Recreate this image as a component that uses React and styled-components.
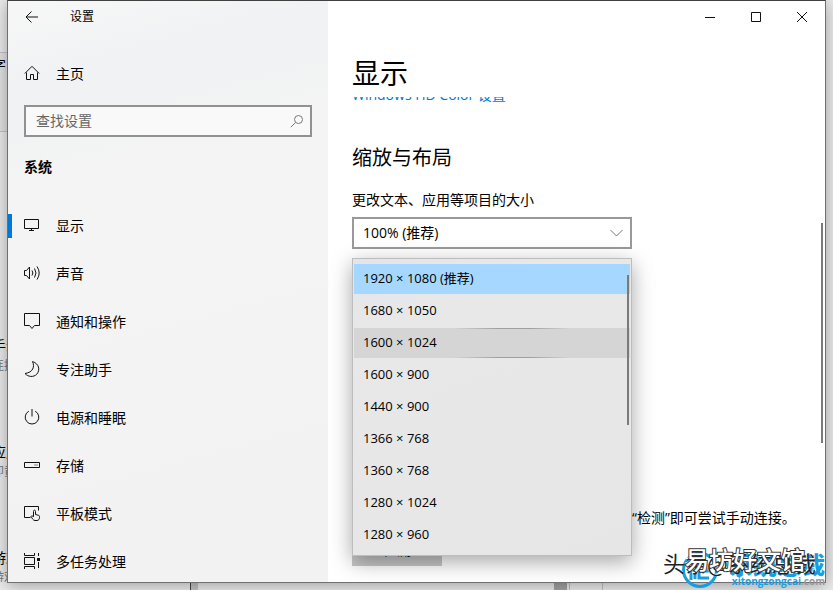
import React from "react";
import styled, { createGlobalStyle } from "styled-components";


const GlobalStyle = createGlobalStyle`
    * {
        box-sizing: border-box;
    }
    body {
        margin: 0;
        overflow: hidden;
        font-family: "Open Sans", "Noto Sans CJK SC", sans-serif;
        font-size: 14px;
        line-height: 20px;
        color: #000;
    }
    h1, h2, h3, p, ul {
        margin: 0;
        padding: 0;
        font-weight: 400;
    }
    button, input, select {
        font: inherit;
        color: inherit;
        border: 0;
        border-radius: 0;
        padding: 0;
    }
`;

const Desktop = styled.div`
    display: grid;
    grid-template: 100vh / 1fr;
    background: #ececec;

    > * {
        grid-area: 1 / 1;
    }
`;

/* the window behind, only its edges can be seen */
const Behind = styled.div`
    display: flex;
    flex-direction: column;
    overflow: hidden;
`;

const BehindLeft = styled.div`
    flex: 1;
    min-height: 0;
    width: 40px;
    overflow: hidden;
    white-space: nowrap;

    .band {
        height: 80px;
        margin-top: 52px;
        padding-top: 2px;
        border: 1px solid #c4c4c4;
        border-width: 1px 0;
        background: #e4e4e4;
    }
    .group {
        margin-top: 66px;
    }
    .first {
        margin-top: 204px;
    }
    .band, .group {
        text-indent: -8px;
    }
    small {
        display: block;
        font-size: 12px;
        color: #777;
    }
`;

const BehindBottom = styled.div`
    flex: none;
    display: grid;
    grid-template-columns: 190px 8px 356px 13px 3px 33px 1fr;
    height: 8px;

    .edge {
        background: #c4c4c4;
        border-left: 1px solid #444;
    }
    .thumb {
        background: #a3a3a3;
    }
    .line {
        border-right: 1px solid #c0c0c0;
    }
`;

const Window = styled.main`
    position: relative;
    display: grid;
    grid-template-columns: 320px 1fr;
    margin: 0 7px 7px;
    border: 1px solid #707070;
    border-top-color: #404040;
    background: #fff;
    box-shadow: 0 2px 16px rgba(0, 0, 0, 0.35);
    min-height: 0;
`;

const Sidebar = styled.aside`
    overflow: hidden;
    background: linear-gradient(165deg, #f7f7f7 0%, #f0f2f3 14%, #f4f4f4 32%, #f2f2f2 100%);
`;

const TitleBar = styled.header`
    display: flex;
    align-items: center;
    height: 32px;
    justify-content: ${({ $end }) => ($end ? "flex-end" : "flex-start")};
    font-size: 12px;
`;

const BarButton = styled.button`
    display: grid;
    place-items: center;
    width: ${({ $wide }) => ($wide ? 48 : 46)}px;
    height: 32px;
    margin-right: ${({ $wide }) => ($wide ? 14 : 0)}px;
    background: none;
`;

const NavLink = styled.a`
    display: flex;
    align-items: center;
    gap: 16px;
    height: 48px;
    padding-left: 12px;
    border-left: 4px solid transparent;
    color: inherit;
    text-decoration: none;
    white-space: nowrap;

    &::before {
        content: "";
        width: 4px;
        height: 24px;
        margin-left: -16px;
        margin-right: -4px;
        background: ${({ $active }) => ($active ? "#0078d7" : "transparent")};
    }
    svg {
        margin-bottom: 2px;
    }
`;

const HomeLink = styled(NavLink)`
    margin-top: 17px;
`;

const SearchBox = styled.label`
    display: flex;
    align-items: center;
    height: 32px;
    margin: 7px 16px 0;
    padding: 0 6px 0 10px;
    border: 2px solid #919191;
    background: #f9f9f9;

    input {
        flex: 1;
        min-width: 0;
        background: none;
        outline: 0;
    }
    input::placeholder {
        color: #666;
        opacity: 1;
    }
`;

const GroupTitle = styled.h3`
    margin: 20px 16px 25px;
    font-size: 14px;
    font-weight: 700;
`;

const Content = styled.section`
    display: flex;
    flex-direction: column;
    min-width: 0;
    min-height: 0;
`;

const PageTitle = styled.h1`
    margin: 22px 24px 6px;
    font-size: 28px;
    line-height: 36px;
`;

const ScrollArea = styled.div`
    flex: 1;
    min-height: 0;
    padding: 0 24px;
    overflow: hidden;
`;

const ColorLink = styled.a`
    display: block;
    margin-top: -12px;
    color: #0078d7;
    text-decoration: none;
`;

const SectionTitle = styled.h2`
    margin: 39px 0 18px;
    font-size: 20px;
    line-height: 28px;
`;

const Field = styled.div`
    position: relative;
    max-width: 280px;

    label {
        display: block;
        margin-bottom: 7px;
        white-space: nowrap;
    }
`;

const Select = styled.select`
    width: 100%;
    height: 32px;
    padding: 0 9px;
    border: 2px solid #999;
    background: #fff;
    appearance: none;
    display: block;
`;

const Chevron = styled.svg`
    position: absolute;
    right: 9px;
    bottom: 12px;
    pointer-events: none;
`;

const PopupAnchor = styled.div`
    position: relative;
    max-width: 280px;
    height: 250px;
    margin-top: 9px;
`;

const Popup = styled.ul`
    position: absolute;
    z-index: 1;
    top: 0;
    width: 100%;
    padding: 5px 1px 3px;
    border: 1px solid #bdbdbd;
    background: linear-gradient(160deg, #e2e5e9 0%, #e8e8e8 20%, #e6e6e6 100%);
    box-shadow: 0 6px 20px rgba(0, 0, 0, 0.35);
    list-style: none;
    font-size: 13px;
`;

const Option = styled.li`
    height: 30px;
    margin-bottom: 2px;
    padding: 3px 9px;
    border: 1px solid transparent;
    border-width: 1px 0;
    white-space: nowrap;
    background: ${({ $state }) => ({ selected: "#a6d8ff", hover: "#d5d5d5" }[$state] || "none")};
    ${({ $state }) => $state === "hover" && `
        border-image: linear-gradient(90deg, #d5d5d5 36%, #a0a0a0 52%, #a0a0a0 64%, #d5d5d5 78%) 1;
        border-width: 1px 0;
    `}
`;

const Thumb = styled.span`
    position: absolute;
    width: 2px;
    background: #7a7a7a;
    right: 2px;
    top: ${({ $page }) => ($page ? 222 : 16)}px;
    height: ${({ $page }) => ($page ? 220 : 150)}px;
`;

const Hint = styled.p`
    padding-left: 280px;
    white-space: nowrap;
`;

const DetectButton = styled.button`
    width: 90px;
    height: 32px;
    margin-top: 6px;
    background: #c8c8c8;
`;

const Watermark = styled.div`
    position: absolute;
    right: 0;
    bottom: -7px;
    width: 164px;
    height: 48px;
    white-space: nowrap;
    pointer-events: none;

    > * {
        position: absolute;
    }
    .brand {
        right: 0;
        top: 8px;
        font-size: 24px;
        line-height: 32px;
        font-weight: 900;
        color: #189ee0;
    }
    .domain {
        right: 0;
        top: 32px;
        font-size: 10px;
        line-height: 16px;
        font-weight: 700;
        color: #189ee0;
    }
    .domain i {
        font-style: normal;
        color: #999;
    }
    .logo {
        left: 20px;
        top: 10px;
    }
    .source, .author {
        font-family: "Noto Sans CJK SC", sans-serif;
        line-height: 32px;
        paint-order: stroke;
        color: #fff;
    }
    .source {
        left: 2px;
        top: 5px;
        font-size: 22px;
        color: #222;
        text-shadow: -1px -1px 0 #fff;
    }
    .author {
        left: 24px;
        top: 2px;
        font-size: 24px;
        font-weight: 500;
        -webkit-text-stroke: 2px #333;
    }
`;

const Icon = ({ children, size = 16 }) => (
    <svg width={size} height={size} viewBox="0 0 16 16" fill="none" stroke="#111" aria-hidden="true">
        {children}
    </svg>
);

const icons = {
    home: <path d="M.8 8.500 8 1.300l7.200 7.200M2.500 7.500v7h4v-5h3v5h4v-7" />,
    display: <path d="M.5 2.5h14v9H.5zM7.5 11.5v2M5 13.5h5" />,
    sound: <path d="M.5 5.5h2l3-3.5v12l-3-3.5h-2zM8 5.5q1.8 2.5 0 5M10.5 3.5q3 4.5 0 9M13 1.5q4.4 6.5 0 13" />,
    notify: <path d="M.5.5h15v12h-5l-2.5 3-2.5-3h-5z" />,
    focus: <path d="M8.5.6C11 5.5 9 11.5 1 12.5c3 3.500 8.500 4 11.700.8C16.500 9 15 2.500 8.500.6z" />,
    power: <path d="M8 0v7.500M4.800 2.200a6.800 6.800 0 1 0 6.400 0" />,
    storage: <path d="M.5 5.500h15v5H.5zM10.500 8h1M12.500 8h1" />,
    tablet: <path d="M6.500 12.500h-6v-11h14v4M9.500 11.500V6.500c0-1.800 2-1.800 2 0v3l3 .8c1 .3 1 1 1 2 0 2-1 3.200-2.500 3.200h-2c-2 0-3-2.500-4-4 .5-1.200 1.700-.6 2.500.5z" />,
    tasks: (
        <>
            <path d="M.5 0v2.500h10V0M.5 4.500h10v7H.5zM.5 16v-2.500h10V16M14.500 0v3M14.500 9v6" />
            <path d="M13 5h3v3h-3z" fill="#111" stroke="none" />
        </>
    ),
};

const navItems = [
    ["display", "显示"],
    ["sound", "声音"],
    ["notify", "通知和操作"],
    ["focus", "专注助手"],
    ["power", "电源和睡眠"],
    ["storage", "存储"],
    ["tablet", "平板模式"],
    ["tasks", "多任务处理"],
];

const resolutions = [
    ["1920 × 1080 (推荐)", "selected"],
    ["1680 × 1050"],
    ["1600 × 1024", "hover"],
    ["1600 × 900"],
    ["1440 × 900"],
    ["1366 × 768"],
    ["1360 × 768"],
    ["1280 × 1024"],
    ["1280 × 960"],
];

const App = () => {

    return <Desktop>
        <GlobalStyle />
        <Behind>
            <BehindLeft>
                <div className="band">字</div>
                <div className="group first">手动<small>连接</small></div>
                <div className="group">应用<small>即黄</small></div>
                <div className="group">游戏<small>游戏</small></div>
            </BehindLeft>
            <BehindBottom>
                <span />
                <span className="edge" />
                <span />
                <span className="thumb" />
                <span className="line" />
                <span className="line" />
                <span />
            </BehindBottom>
        </Behind>
        <Window>
            <Sidebar>
                <TitleBar>
                    <BarButton $wide aria-label="返回">
                        <Icon><path d="M14 8H2.500M7.500 2.500 2 8l5.500 5.500" /></Icon>
                    </BarButton>
                    设置
                </TitleBar>
                <HomeLink href="#home"><Icon>{icons.home}</Icon>主页</HomeLink>
                <SearchBox>
                    <input type="text" placeholder="查找设置" aria-label="查找设置" />
                    <svg width="14" height="14" viewBox="0 0 14 14" fill="none" stroke="#777">
                        <circle cx="8.500" cy="5.500" r="4" />
                        <path d="M5.500 8.500.8 13.200" />
                    </svg>
                </SearchBox>
                <GroupTitle>系统</GroupTitle>
                <nav>
                    {navItems.map(([icon, text]) => (
                        <NavLink key={icon} href={`#${icon}`} $active={icon === "display"}>
                            <Icon>{icons[icon]}</Icon>{text}
                        </NavLink>
                    ))}
                </nav>
            </Sidebar>
            <Content>
                <TitleBar $end>
                    <BarButton aria-label="最小化"><Icon><path d="M3 8.500h10" /></Icon></BarButton>
                    <BarButton aria-label="最大化"><Icon><path d="M3.500 3.500h9v9h-9z" /></Icon></BarButton>
                    <BarButton aria-label="关闭"><Icon><path d="m3 3 10 10M13 3 3 13" /></Icon></BarButton>
                </TitleBar>
                <PageTitle>显示</PageTitle>
                <ScrollArea>
                    <ColorLink href="#hdcolor">Windows HD Color 设置</ColorLink>
                    <SectionTitle>缩放与布局</SectionTitle>
                    <Field>
                        <label htmlFor="scale">更改文本、应用等项目的大小</label>
                        <Select id="scale">
                            <option>100% (推荐)</option>
                        </Select>
                        <Chevron width="13" height="8" viewBox="0 0 13 8" fill="none" stroke="#777">
                            <path d="m.5 1 6 6 6-6" />
                        </Chevron>
                    </Field>
                    <PopupAnchor>
                        <Popup role="listbox" aria-label="分辨率">
                            {resolutions.map(([text, state]) => (
                                <Option key={text} role="option" aria-selected={state === "selected"} $state={state}>
                                    {text}
                                </Option>
                            ))}
                            <Thumb />
                        </Popup>
                    </PopupAnchor>
                    <Hint>“检测”即可尝试手动连接。</Hint>
                    <DetectButton>检测</DetectButton>
                </ScrollArea>
            </Content>
            <Thumb $page />
            <Watermark>
                <span className="brand">系统总裁</span>
                <svg className="logo" width="38" height="38" viewBox="0 0 38 38" fill="none" stroke="#189ee0" strokeWidth="3">
                    <circle cx="19" cy="19" r="16.500" />
                    <path d="M10 12v17M14 28V14h13v6H18M18 20v7h10" />
                </svg>
                <span className="domain">xitongzongcai<i>.com</i></span>
                <span className="source">头条@系统总裁</span>
                <span className="author">易坊好文馆</span>
            </Watermark>
        </Window>
    </Desktop>

};

export default App;
